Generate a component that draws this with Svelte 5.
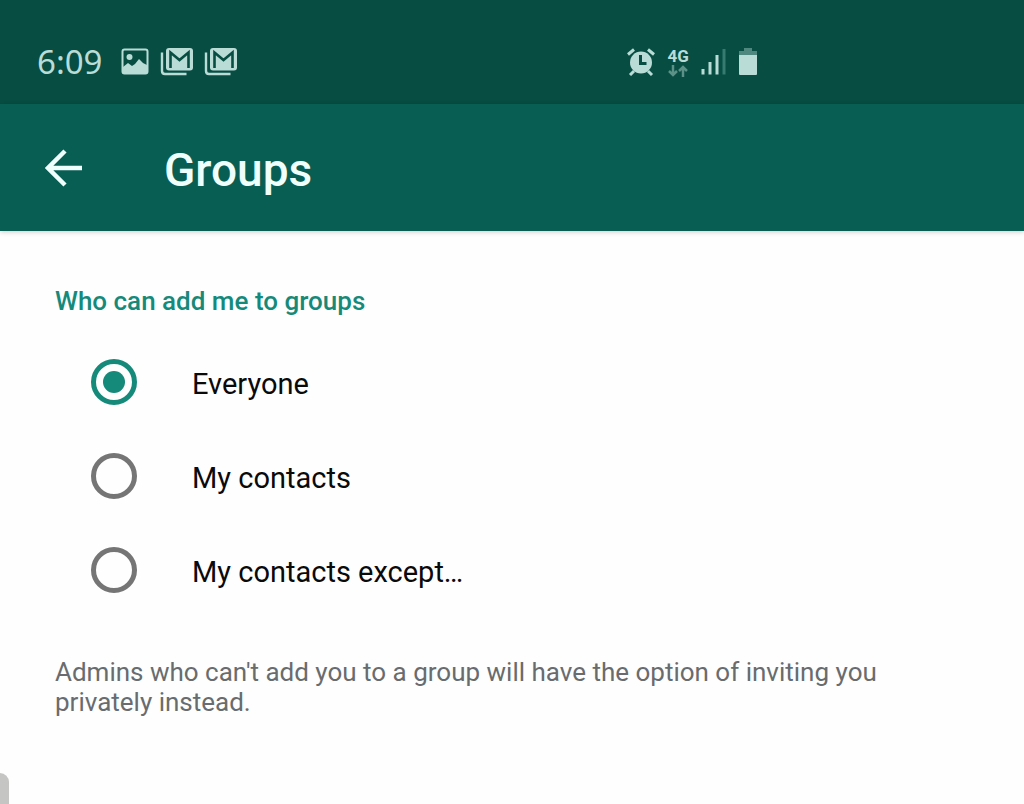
<!-- Privacy screen: who can add me to groups -->
<script lang="ts">
  interface Option {
    value: string;
    label: string;
  }

  const options: Option[] = [
    { value: "everyone", label: "Everyone" },
    { value: "contacts", label: "My contacts" },
    { value: "except", label: "My contacts except…" },
  ];

  let selected = $state("everyone");
</script>

{#snippet mailIcon()}
  <svg class="icon" width="33" height="28" viewBox="0 0 33 28" aria-hidden="true">
    <path d="M2 4.5V23q0 3 3 3h21.500" fill="none" stroke="currentColor" stroke-width="2.400" />
    <rect x="6" y="0" width="27" height="22.500" rx="3" fill="currentColor" />
    <path d="M10.500 20V4.500l9 7.500 9-7.500V20" fill="none" stroke="#074d42" stroke-width="2.600" />
  </svg>
{/snippet}

<div class="screen">
  <div class="status-bar">
    <div class="status-group">
      <span class="time">6:09</span>
      <svg class="icon" width="28" height="28" viewBox="0 0 28 28" aria-hidden="true">
        <rect x="1.500" y="1.500" width="25" height="24" rx="2" fill="none" stroke="currentColor" stroke-width="2" />
        <circle cx="8.500" cy="9" r="3" fill="currentColor" />
        <path d="M2 19l5-4 4 3 3-2 4-5 4 4 4 2v9H2z" fill="currentColor" />
      </svg>
      {@render mailIcon()}
      {@render mailIcon()}
    </div>

    <div class="status-group signals">
      <svg class="icon" width="28" height="28" viewBox="0 0 28 28" aria-hidden="true">
        <circle cx="14" cy="14.500" r="11" fill="currentColor" />
        <path d="M1 6.500l6-5M27 6.500l-6-5M3 27l4-4M25 27l-4-4" stroke="currentColor" stroke-width="3" />
        <path d="M13.500 7v8.500h6" fill="none" stroke="#074d42" stroke-width="3" />
      </svg>
      <div class="network">
        <span>4G</span>
        <svg width="20" height="12" viewBox="0 0 20 12" aria-hidden="true">
          <path d="M5 0v10M1 6l4 4 4-4M15 12V2M11 6l4-4 4 4" fill="none" stroke="#5b9187" stroke-width="2.500" />
        </svg>
      </div>
      <svg class="icon" width="25" height="28" viewBox="0 0 25 28" aria-hidden="true">
        <path d="M2 26.500v-5.500M9 26.500V14M16 26.500V7" stroke="currentColor" stroke-width="3" />
        <path d="M23 26.500V1" stroke="#377a70" stroke-width="3" />
      </svg>
      <svg class="icon" width="20" height="28" viewBox="0 0 20 28" aria-hidden="true">
        <path d="M6 0h8v3h5v5H1V3h5z" fill="#4e887e" />
        <path d="M1 7h18v19q0 1-1 1H2q-1 0-1-1z" fill="currentColor" />
      </svg>
    </div>
  </div>

  <header class="app-bar">
    <button class="back" type="button" aria-label="Back">
      <svg width="38" height="38" viewBox="0 0 38 38" aria-hidden="true">
        <path d="M37 19H4M20 2L3 19l17 17" fill="none" stroke="currentColor" stroke-width="4.500" />
      </svg>
    </button>
    <h1>Groups</h1>
  </header>

  <main>
    <fieldset>
      <legend>Who can add me to groups</legend>
      {#each options as option}
        <label class="option">
          <input type="radio" name="groups" value={option.value} bind:group={selected} />
          <span>{option.label}</span>
        </label>
      {/each}
    </fieldset>
    <p class="note">
      Admins who can't add you to a group will have the option of inviting you
      privately instead.
    </p>
  </main>

  <div class="edge-handle"></div>
</div>

<style>
  :global(body) {
    margin: 0;
    background: #fefefe;
  }

  .screen {
    font-family: Roboto, "Liberation Sans", sans-serif;
    color: #0a0a0a;
  }

  .status-bar {
    display: flex;
    align-items: center;
    justify-content: space-between;
    box-sizing: border-box;
    height: 104px;
    padding: 20px 26% 0 37px;
    background: #074d42;
    color: #b9dcd6;
  }

  .status-group {
    display: flex;
    align-items: center;
    gap: 11px;
  }

  .signals {
    gap: 12px;
  }

  .icon {
    display: block;
    flex-shrink: 0;
  }

  .time {
    margin-right: 8px;
    font-family: "Noto Sans", sans-serif;
    font-size: 33px;
    font-weight: 400;
    line-height: 40px;
  }

  .network {
    display: flex;
    flex-direction: column;
    align-items: center;
    font-size: 17px;
    font-weight: 700;
    line-height: 17px;
  }

  .app-bar {
    position: relative;
    display: flex;
    align-items: center;
    gap: 81px;
    height: 127px;
    padding: 0 45px;
    background: #095e54;
    color: #effffc;
    box-shadow: 0 1px 5px rgba(0, 0, 0, 0.2);
  }

  .back {
    display: flex;
    padding: 0;
    border: 0;
    background: none;
    color: inherit;
  }

  h1 {
    margin: 0;
    padding-top: 4px;
    font-size: 46px;
    font-weight: 500;
    line-height: 54px;
  }

  main {
    padding: 55px;
  }

  fieldset {
    margin: 0;
    padding: 0;
    border: 0;
  }

  legend {
    padding: 0;
    margin-bottom: 19px;
    color: #168a7a;
    font-size: 26px;
    font-weight: 500;
    line-height: 30px;
  }

  .option {
    display: flex;
    align-items: center;
    gap: 55px;
    height: 94px;
    padding-left: 36px;
    font-size: 29px;
    line-height: 34px;
  }

  .option span {
    padding-top: 3px;
  }

  .option input {
    display: grid;
    place-items: center;
    appearance: none;
    flex-shrink: 0;
    box-sizing: border-box;
    width: 46px;
    height: 46px;
    margin: 0;
    border: 5px solid #757575;
    border-radius: 50%;
  }

  .option input:checked {
    border-color: #168a7a;
  }

  .option input:checked::before {
    content: "";
    width: 22px;
    height: 22px;
    border-radius: 50%;
    background: #168a7a;
  }

  .note {
    margin: 40px 0 0;
    max-width: 840px;
    color: #686c6e;
    font-size: 26px;
    line-height: 30px;
  }

  .edge-handle {
    position: fixed;
    left: 0;
    bottom: 0;
    width: 9px;
    height: 31px;
    border-top-right-radius: 9px;
    background: #c5c6c4;
  }
</style>
